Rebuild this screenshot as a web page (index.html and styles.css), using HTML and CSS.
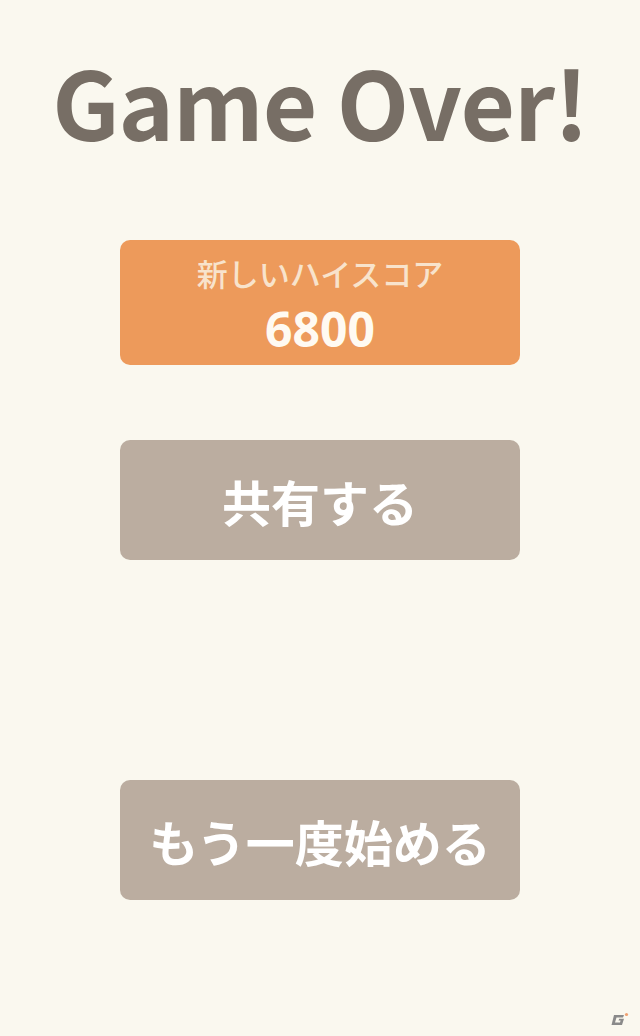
FILE: index.html
```html
<!DOCTYPE html>
<html lang="ja">
<head>
    <title>Game Over</title>
    <meta charset="UTF-8">
    <meta name="viewport" content="width=device-width, initial-scale=1.0">
    <link rel="stylesheet" href="styles.css">
</head>
<body>
    <div class="screen">
        <h1 class="title">Game Over!</h1>
        <div class="best-box">
            <div class="best-label">新しいハイスコア</div>
            <div class="best-score">6800</div>
        </div>
        <button type="button" class="action share">共有する</button>
        <button type="button" class="action restart">もう一度始める</button>
    </div>
    <svg class="mark" width="24" height="20" viewBox="0 0 24 20">
        <path d="M6 5 L16 5 L15 7.5 L8.5 7.5 L7 12.5 L12 12.5 L12.6 10.5 L10.5 10.5 L11.2 8.8 L16 8.8 L14 15 L3.5 15 Z" fill="#8a8a8a"/>
        <circle cx="18.5" cy="4.5" r="1.6" fill="#f0a070"/>
    </svg>
</body>
</html>
```

FILE: styles.css
```css
body {
    margin: 0;
    background-color: #faf8ef;
    font-family: "Noto Sans CJK JP", "Noto Sans", sans-serif;
    min-height: 100vh;
    position: relative;
}
.screen {
    display: flex;
    flex-direction: column;
    align-items: center;
}
.title {
    margin: 40px 0 0 0;
    font-size: 94px;
    line-height: 120px;
    letter-spacing: -1px;
    font-weight: bold;
    color: #776e65;
}
.best-box {
    margin-top: 80px;
    width: 400px;
    height: 125px;
    background-color: #ed9a5b;
    border-radius: 10px;
    display: flex;
    flex-direction: column;
    align-items: center;
    box-sizing: border-box;
    padding-top: 13px;
}
.best-label {
    font-size: 31px;
    line-height: 40px;
    font-weight: 500;
    color: #f8e3cc;
}
.best-score {
    margin-top: 6px;
    font-family: "Open Sans", sans-serif;
    font-size: 48px;
    line-height: 60px;
    font-weight: bold;
    color: #fffaf2;
}
.action {
    width: 400px;
    height: 120px;
    border: none;
    border-radius: 10px;
    background-color: #bbada0;
    color: #ffffff;
    font-family: inherit;
    font-size: 49px;
    font-weight: bold;
    padding: 0;
}
.share {
    margin-top: 75px;
}
.restart {
    margin-top: 220px;
}
.mark {
    position: absolute;
    right: 8px;
    bottom: 6px;
}
```
